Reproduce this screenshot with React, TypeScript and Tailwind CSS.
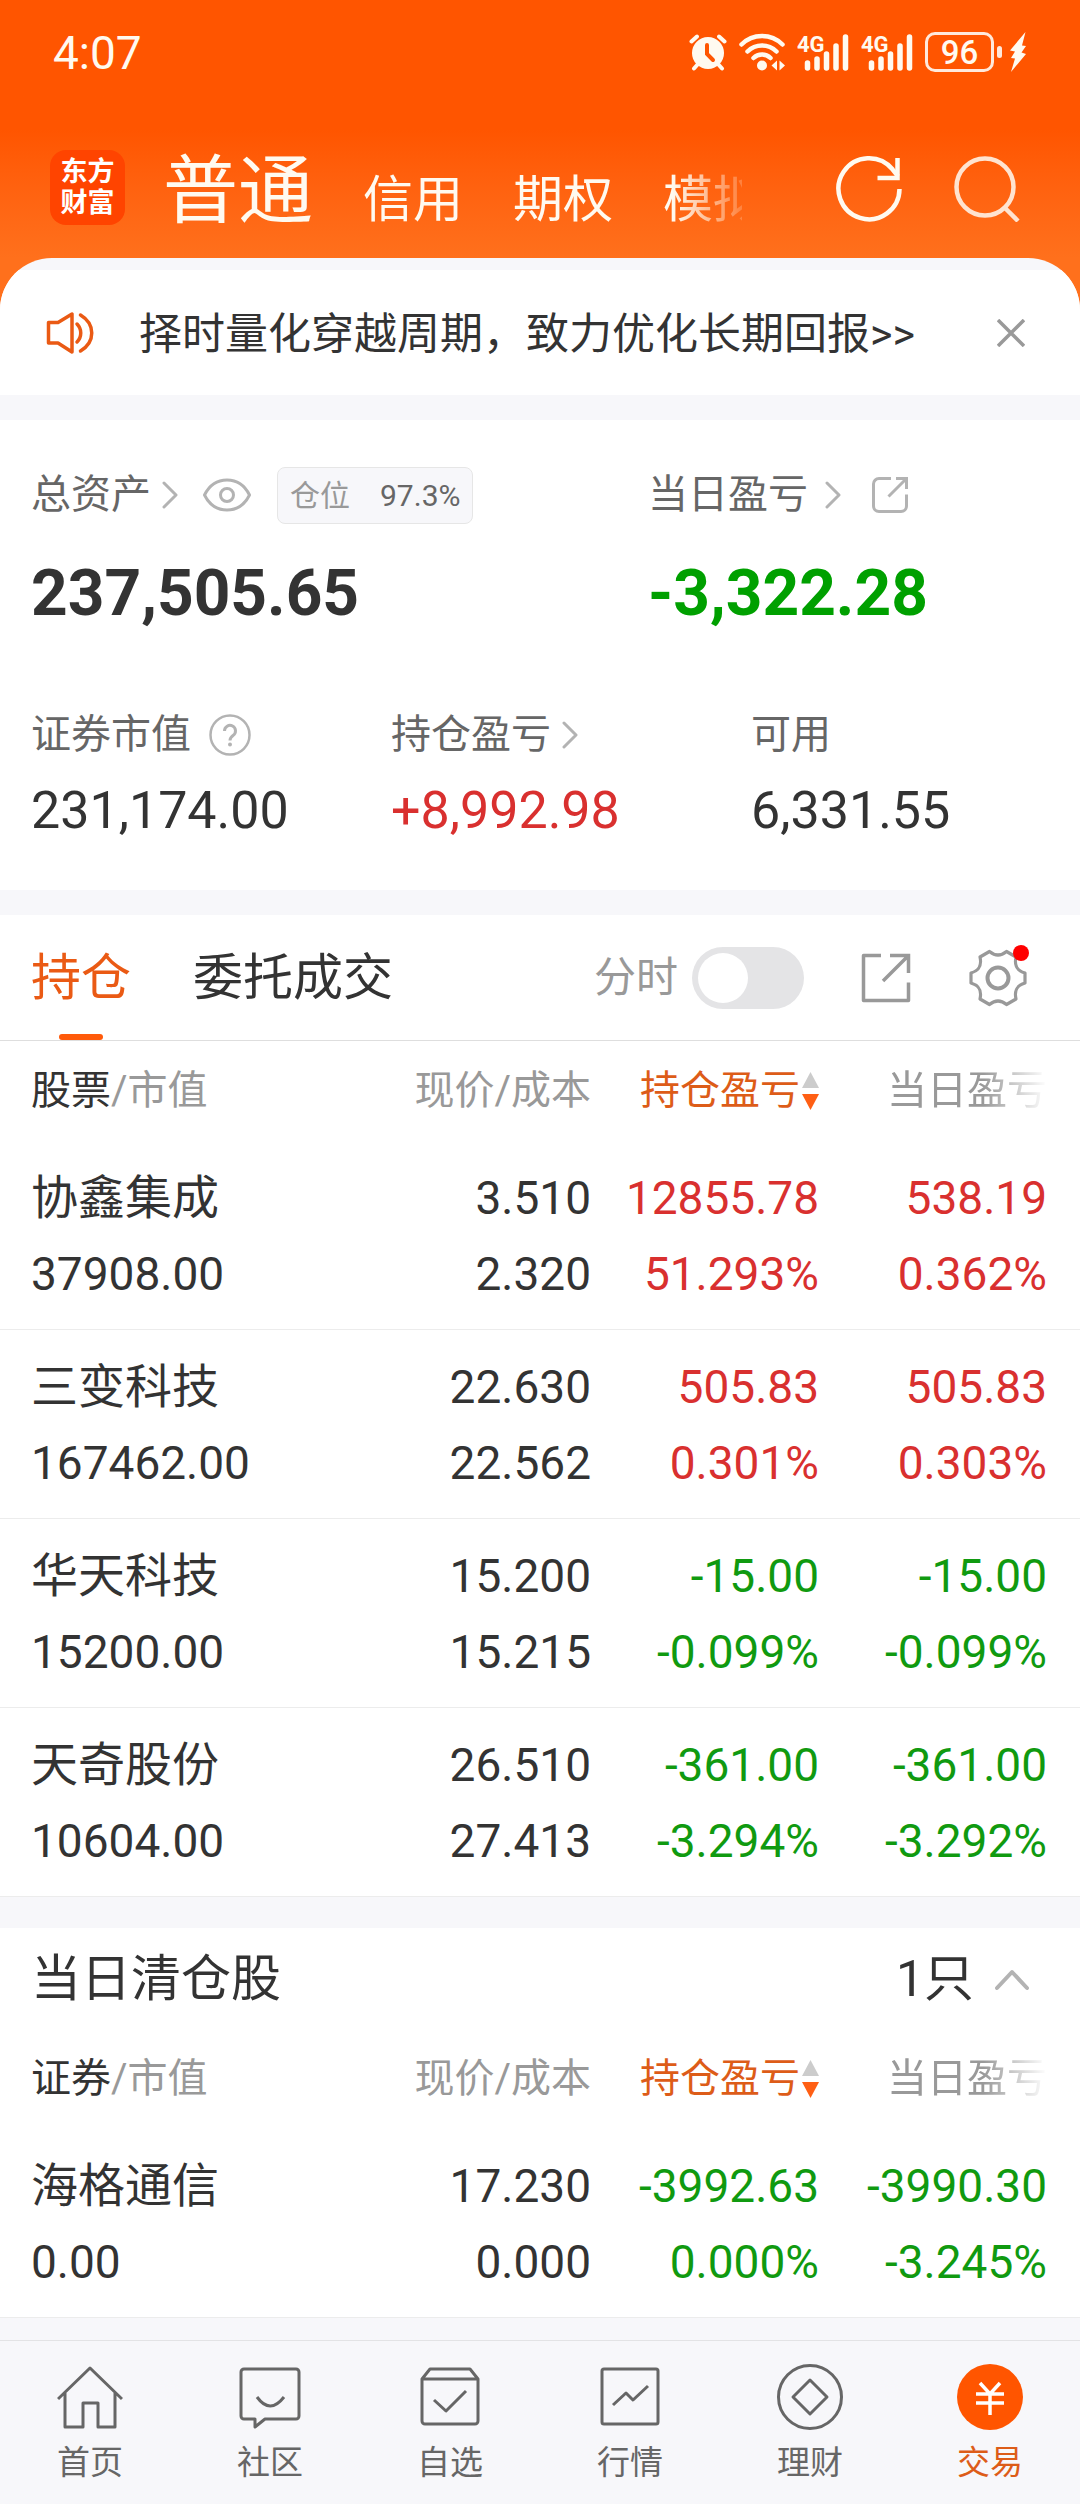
import React from 'react';

const ICON = {
  fill: 'none',
  stroke: 'currentColor',
} as const;

function StatusBar() {
  return (
    <div className="flex h-[104px] items-center justify-between pl-[53px] pr-[54px] text-[#fffaf0]">
      <span className="pt-[2px] text-[46px] leading-none">4:07</span>
      <div className="flex items-center">
        <svg className="h-[38px] w-[38px]" viewBox="0 0 38 38" {...ICON} strokeWidth="4" strokeLinecap="round" aria-label="闹钟">
          <circle cx="19" cy="20" r="16" fill="currentColor" stroke="none" />
          <path d="M2.5 8.5 8 3.5M35.500 8.500 30 3.500M9 31 5 35.500M29 31l4 4.500" />
          <path d="M18 12v9l6 6" stroke="#ff5500" />
        </svg>
        <svg className="ml-3 h-[38px] w-[46px]" viewBox="0 0 46 38" {...ICON} strokeWidth="4.500" strokeLinecap="round" aria-label="无线网络">
          <path d="M2.500 11.500a29 29 0 0 1 41 0M8.500 18.500a20.500 20.500 0 0 1 29 0M14.500 25a12 12 0 0 1 17 0" />
          <circle cx="23" cy="32.500" r="5" fill="currentColor" stroke="none" />
          <path d="M38 27.500v10l-5.500-5zM40.500 27.500v10l5.500-5z" fill="currentColor" stroke="none" />
        </svg>
        <Signal />
        <Signal />
        <div className="ml-3 flex h-10 w-[69px] items-center justify-center rounded-[10px] border-[3px] border-[#ffe9dc] text-[33px] font-medium leading-none">
          96
        </div>
        <span className="ml-[3px] h-3 w-[5px] rounded-full bg-[#ffe9dc]" />
        <svg className="ml-2 h-10 w-4" viewBox="0 0 16 40" fill="currentColor" aria-label="充电中">
          <path d="M15.500 0 0 18.500 5 19.500 1 26l4 .5L1 40 16 22l-4.500-1.500L16 14l-4-.5z" />
        </svg>
      </div>
    </div>
  );
}

function Signal() {
  return (
    <svg className="ml-3 h-[38px] w-[52px]" viewBox="0 0 52 38" aria-label="4G 信号">
      <text x="0" y="19" fontSize="22" fontWeight="700" fill="currentColor">4G</text>
      <g stroke="currentColor" strokeWidth="5.500" strokeLinecap="round">
        <path d="M10.500 30v5M20 26v9M29.500 21v14M39 13v22M48.500 4v31" />
      </g>
    </svg>
  );
}

function AppHeader() {
  return (
    <div className="flex h-[154px] items-start pl-[50px] pr-[58px] text-[#fffaf0]">
      <div className="mt-[46px] flex h-[75px] w-[75px] shrink-0 flex-col items-center justify-center rounded-2xl bg-[#ff4400] text-[27px] font-bold leading-[31px] text-white">
        <span>东方</span>
        <span>财富</span>
      </div>
      <nav className="ml-[38px] mt-[33px] flex min-w-0 flex-1 items-baseline gap-[50px] overflow-hidden whitespace-nowrap text-[50px] leading-[108px] [mask-image:linear-gradient(to_left,rgb(0_0_0/0.2),black_70px)]">
        <a href="#normal" aria-current="page" className="text-[75px]">普通</a>
        <a href="#credit">信用</a>
        <a href="#option">期权</a>
        <a href="#sim">模拟</a>
      </nav>
      <button type="button" aria-label="刷新" className="ml-[94px] mt-[50px]">
        <svg className="h-[68px] w-[68px]" viewBox="0 0 68 68" {...ICON} strokeWidth="4.500">
          <path d="M63.500 35A30.500 30.500 0 1 1 56.500 15.300l5.500 7" />
          <path d="M61.500 4v20H41.500" />
        </svg>
      </button>
      <button type="button" aria-label="搜索" className="ml-[50px] mt-[50px] text-[#ffe3d0]">
        <svg className="h-[68px] w-[68px]" viewBox="0 0 68 68" {...ICON} strokeWidth="4.500">
          <circle cx="31" cy="33" r="28.500" />
          <path d="m50 53 14 14" />
        </svg>
      </button>
    </div>
  );
}

function Notice() {
  return (
    <div className="flex h-[125px] items-center bg-white pl-[46px] pr-[55px]">
      <svg className="h-[42px] w-[48px] text-[#ea5a14]" viewBox="0 0 48 42" {...ICON} strokeWidth="3.500" strokeLinejoin="round" strokeLinecap="round" aria-hidden="true">
        <path d="M2.500 10.500h9.500L26 2v38l-14-9H2.500z" />
        <path d="M31 12c5 5 5 13 0 18M34.500 3c15 9 15 27 0 36" />
      </svg>
      <p className="ml-[45px] flex-1 whitespace-nowrap pt-[2px] text-[43px] leading-[60px]">
        择时量化穿越周期，致力优化长期回报&gt;&gt;
      </p>
      <button type="button" aria-label="关闭" className="text-[#999]">
        <svg className="h-7 w-7" viewBox="0 0 28 28" {...ICON} strokeWidth="3.500">
          <path d="m1 1 26 26M27 1 1 27" />
        </svg>
      </button>
    </div>
  );
}

function Chevron({ className }: { className: string }) {
  return (
    <svg className={className} viewBox="0 0 16 28" {...ICON} strokeWidth="3" strokeLinecap="round" strokeLinejoin="round" aria-hidden="true">
      <path d="m2 2 12 12L2 26" />
    </svg>
  );
}

function Assets() {
  return (
    <section className="bg-white pt-[47px] pb-[43px]">
      <div className="flex">
        <div className="w-3/5 pl-[31px]">
          <div className="flex h-14 items-center text-[40px] text-[#666]">
            <a href="#assets" className="flex items-center">
              总资产
              <Chevron className="ml-[11px] h-7 w-4 text-[#b3b3b3]" />
            </a>
            <button type="button" aria-label="隐藏金额" className="ml-[25px] text-[#b3b3b3]">
              <svg className="h-[34px] w-[48px]" viewBox="0 0 48 34" {...ICON} strokeWidth="3">
                <path d="M1.500 17C6 8 14 2 24 2s18 6 22.500 15C42 26 34 32 24 32S6 26 1.500 17z" strokeLinejoin="round" />
                <circle cx="24" cy="17" r="6.500" />
              </svg>
            </button>
            <div className="ml-[26px] flex h-[57px] items-center gap-[30px] rounded-lg border border-[#e6e6e6] bg-[#f7f7fa] px-3 text-[30px]">
              <span className="text-[#999]">仓位</span>
              <span>97.3%</span>
            </div>
          </div>
          <div className="mt-[31px] text-[64px] font-bold leading-[80px]">237,505.65</div>
        </div>
        <div className="flex-1">
          <div className="flex h-14 items-center text-[40px] text-[#666]">
            <a href="#today" className="flex items-center">
              当日盈亏
              <Chevron className="ml-[17px] h-7 w-4 text-[#b3b3b3]" />
            </a>
            <button type="button" aria-label="分享当日盈亏" className="ml-[30px] text-[#b3b3b3]">
              <svg className="h-[38px] w-[38px]" viewBox="0 0 38 38" {...ICON} strokeWidth="3">
                <path d="M20 2.500H8A5.500 5.500 0 0 0 2.500 8v22A5.500 5.500 0 0 0 8 35.500h22a5.500 5.500 0 0 0 5.500-5.500V18.500" />
                <path d="M25 2.500h10.500V13M35.500 2.500 17.500 20.500" />
              </svg>
            </button>
          </div>
          <div className="mt-[31px] text-[64px] font-bold leading-[80px] text-[#00a000]">-3,322.28</div>
        </div>
      </div>
      <dl className="mt-[71px] grid grid-cols-3">
        <div className="pl-[31px]">
          <dt className="flex h-[60px] items-center text-[40px] text-[#666]">
            证券市值
            <button type="button" aria-label="证券市值说明" className="ml-[18px] text-[#b3b3b3]">
              <svg className="h-[42px] w-[42px]" viewBox="0 0 42 42" {...ICON} strokeWidth="2.500">
                <circle cx="21" cy="21" r="19.500" />
                <path d="M15.500 17a5.500 5.500 0 1 1 8.500 4.500c-2 1.500-3 2.500-3 5" strokeWidth="3" />
                <circle cx="21" cy="30.500" r="2" fill="currentColor" stroke="none" />
              </svg>
            </button>
          </dt>
          <dd className="mt-[10px] text-[52px] leading-[72px]">231,174.00</dd>
        </div>
        <div className="pl-[31px]">
          <dt className="flex h-[60px] items-center text-[40px] text-[#666]">
            <a href="#profit" className="flex items-center">
              持仓盈亏
              <Chevron className="ml-[11px] h-7 w-4 text-[#b3b3b3]" />
            </a>
          </dt>
          <dd className="mt-[10px] text-[52px] leading-[72px] text-[#d9302f]">+8,992.98</dd>
        </div>
        <div className="pl-[31px]">
          <dt className="flex h-[60px] items-center text-[40px] text-[#666]">可用</dt>
          <dd className="mt-[10px] text-[52px] leading-[72px]">6,331.55</dd>
        </div>
      </dl>
    </section>
  );
}

function HoldingTabs() {
  return (
    <div className="flex h-[126px] items-center border-b border-[#dedede] pl-[31px] pr-[53px] text-[50px]">
      <a href="#holdings" aria-current="page" className="relative flex h-full items-center pt-[2px] text-[#ea5a14]">
        持仓
        <span className="absolute bottom-0 left-1/2 h-[6px] w-11 -translate-x-1/2 rounded-full bg-[#ff5a0a]" />
      </a>
      <a href="#orders" className="ml-[62px] pt-[2px]">委托成交</a>
      <label className="ml-auto flex items-center text-[42px] text-[#999]">
        分时
        <input type="checkbox" role="switch" className="peer sr-only" />
        <span className="ml-[14px] flex h-[62px] w-[112px] items-center rounded-full bg-[#e4e4e6] px-[6px]">
          <span className="h-[50px] w-[50px] rounded-full bg-white" />
        </span>
      </label>
      <button type="button" aria-label="分享持仓" className="ml-[57px] text-[#999]">
        <svg className="h-[50px] w-[50px]" viewBox="0 0 50 50" {...ICON} strokeWidth="3.500">
          <path d="M20 2.500H2.500v45h45V29.500" strokeLinejoin="round" />
          <path d="M29 2.500h18.500V20M47.500 2.500 22 28" />
        </svg>
      </button>
      <button type="button" aria-label="设置" className="relative ml-[58px] text-[#999]">
        <svg className="h-[58px] w-[58px]" viewBox="0 0 58 58" {...ICON} strokeWidth="3.200" strokeLinejoin="round">
          <path d="M20.500 2.500Q29 9.500 37.500 2.500L47 8C45 17 48 21.500 56 24v10c-8 2.500-11 7-9 16l-9.500 5.500Q29 48.500 20.500 55.500L11 50C13 41 10 36.500 2 34V24c8-2.500 11-7 9-16z" />
          <circle cx="29" cy="29" r="10.500" strokeWidth="4" />
        </svg>
        <span className="absolute -right-[2px] -top-1 h-4 w-4 rounded-full bg-[#ff0000]" />
      </button>
    </div>
  );
}

type Row = { name: string; value: string; price: string; cost: string; pl: string; plPct: string; day: string; dayPct: string; up: boolean };

const HOLDINGS: Row[] = [
  { name: '协鑫集成', value: '37908.00', price: '3.510', cost: '2.320', pl: '12855.78', plPct: '51.293%', day: '538.19', dayPct: '0.362%', up: true },
  { name: '三变科技', value: '167462.00', price: '22.630', cost: '22.562', pl: '505.83', plPct: '0.301%', day: '505.83', dayPct: '0.303%', up: true },
  { name: '华天科技', value: '15200.00', price: '15.200', cost: '15.215', pl: '-15.00', plPct: '-0.099%', day: '-15.00', dayPct: '-0.099%', up: false },
  { name: '天奇股份', value: '10604.00', price: '26.510', cost: '27.413', pl: '-361.00', plPct: '-3.294%', day: '-361.00', dayPct: '-3.292%', up: false },
];

const CLEARED: Row[] = [
  { name: '海格通信', value: '0.00', price: '17.230', cost: '0.000', pl: '-3992.63', plPct: '0.000%', day: '-3990.30', dayPct: '-3.245%', up: false },
];

function StockTable({ first, rows }: { first: string; rows: Row[] }) {
  return (
    <table className="w-full table-fixed text-right text-[46px] leading-[76px]">
      <colgroup>
        <col />
        <col className="w-[250px]" />
        <col className="w-[228px]" />
        <col className="w-[261px]" />
      </colgroup>
      <thead>
        <tr className="h-[100px] whitespace-nowrap text-[40px] leading-[60px] text-[#999]">
          <th scope="col" className="p-0 pl-[31px] text-left font-normal">
            <span className="text-[#333]">{first}</span>/市值
          </th>
          <th scope="col" className="p-0 font-normal">现价/成本</th>
          <th scope="col" className="p-0 font-normal">
            <button type="button" className="inline-flex items-center gap-[2px] align-top text-[#dd5c18]">
              持仓盈亏
              <svg className="h-[38px] w-[17px]" viewBox="0 0 17 38" aria-hidden="true">
                <path d="M8.500 0 17 16H0z" fill="#ccc" />
                <path d="M8.500 38 17 22H0z" fill="#ff5f14" />
              </svg>
            </button>
          </th>
          <th scope="col" className="p-0 pr-[33px] font-normal">
            <span className="inline-block align-top [mask-image:linear-gradient(to_right,black_60%,transparent)]">当日盈亏</span>
          </th>
        </tr>
      </thead>
      <tbody>
        {rows.map((r) => (
          <tr key={r.name} className="border-b border-[#ececec]">
            <td className="p-0 pb-[17px] pl-[31px] pt-[19px] text-left">
              <div className="text-[47px]">{r.name}</div>
              <div>{r.value}</div>
            </td>
            <td className="p-0 pb-[17px] pt-[19px]">
              <div>{r.price}</div>
              <div>{r.cost}</div>
            </td>
            <td className={`p-0 pb-[17px] pt-[19px] ${r.up ? 'text-[#d9302f]' : 'text-[#109a10]'}`}>
              <div>{r.pl}</div>
              <div>{r.plPct}</div>
            </td>
            <td className={`p-0 pb-[17px] pr-[33px] pt-[19px] ${r.up ? 'text-[#d9302f]' : 'text-[#109a10]'}`}>
              <div>{r.day}</div>
              <div>{r.dayPct}</div>
            </td>
          </tr>
        ))}
      </tbody>
    </table>
  );
}

const NAV = [
  {
    label: '首页',
    icon: <path d="M1 35 33 4l32 31M8 29v34h18V39h15v24h17V29" />,
  },
  {
    label: '社区',
    icon: <path d="M7 5h52a3 3 0 0 1 3 3v44a3 3 0 0 1-3 3H28l-10 8v-8H7a3 3 0 0 1-3-3V8a3 3 0 0 1 3-3zM20 33q13 18 27 0" />,
  },
  {
    label: '自选',
    icon: <path d="M5 15 13 5h40l8 10v42a3 3 0 0 1-3 3H8a3 3 0 0 1-3-3zM5 15h56M17 36l12 11 20-20" />,
  },
  {
    label: '行情',
    icon: <path d="M7 5h52a2 2 0 0 1 2 2v51a2 2 0 0 1-2 2H7a2 2 0 0 1-2-2V7a2 2 0 0 1 2-2zM16 41l13-12 7 7 15-14" />,
  },
  {
    label: '理财',
    icon: (
      <>
        <circle cx="33" cy="33" r="31.500" />
        <path d="m33 16 17 17-17 17-17-17z" />
      </>
    ),
  },
];

function BottomNav() {
  return (
    <nav className="grid h-[164px] grid-cols-6 border-t border-[#e3e3e5] bg-[#f7f7fa] text-[33px] leading-[46px] text-[#666]">
      {NAV.map((n) => (
        <a key={n.label} href={`#${n.label}`} className="flex flex-col items-center gap-[10px] pt-[23px]">
          <svg className="h-[66px] w-[66px]" viewBox="0 0 66 66" {...ICON} strokeWidth="3" strokeLinejoin="round" aria-hidden="true">
            {n.icon}
          </svg>
          {n.label}
        </a>
      ))}
      <a href="#trade" aria-current="page" className="flex flex-col items-center gap-[10px] pt-[23px] text-[#dd5c18]">
        <svg className="h-[66px] w-[66px]" viewBox="0 0 66 66" fill="none" stroke="#fff" strokeWidth="3.500" aria-hidden="true">
          <circle cx="33" cy="33" r="33" fill="#ff5500" stroke="none" />
          <path d="m23 19 10 11 10-11M19 30h28M19 39h28M33 30v21" />
        </svg>
        交易
      </a>
    </nav>
  );
}

export default function App() {
  return (
    <div className="flex min-h-screen flex-col bg-[#f7f7fa] font-['Roboto','Noto_Sans_CJK_SC',sans-serif] text-[#333]" lang="zh-CN">
      <header className="bg-linear-to-b from-[#ff5500] from-[130px] to-[#ff701c] to-[258px] pb-[60px]">
        <StatusBar />
        <AppHeader />
      </header>
      <main className="-mt-[60px] overflow-hidden rounded-t-[52px] bg-[#f7f7fa] pt-3">
        <Notice />
        <div className="mt-[25px]">
          <Assets />
        </div>
        <section className="mt-[25px] bg-white">
          <HoldingTabs />
          <StockTable first="股票" rows={HOLDINGS} />
        </section>
        <section className="mt-[31px] bg-white">
          <div className="flex h-[101px] items-center pl-[31px] pr-[51px] pt-[2px] text-[50px]">
            <h2>当日清仓股</h2>
            <button type="button" aria-expanded="true" className="ml-auto flex items-center gap-[21px]">
              1只
              <svg className="h-[22px] w-[34px] text-[#b3b3b3]" viewBox="0 0 34 22" {...ICON} strokeWidth="4" strokeLinecap="round" strokeLinejoin="round" aria-hidden="true">
                <path d="M2 19 17 3l15 16" />
              </svg>
            </button>
          </div>
          <StockTable first="证券" rows={CLEARED} />
        </section>
      </main>
      <footer className="mt-auto">
        <BottomNav />
      </footer>
    </div>
  );
}
